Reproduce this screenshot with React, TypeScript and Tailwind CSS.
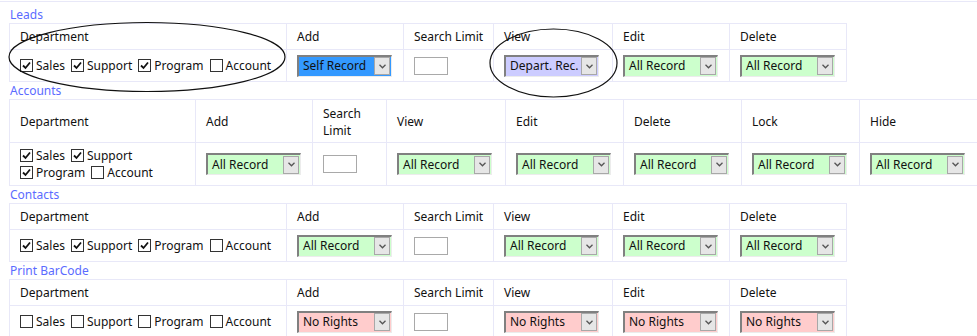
import React from 'react'

type Tone = 'blue' | 'lav' | 'green' | 'red'

const TONE: Record<Tone, string> = {
    blue: 'bg-[#3399ff]',
    lav: 'bg-[#ccccff]',
    green: 'bg-[#ccffcc]',
    red: 'bg-[#ffcccc]',
}

function Check({ on, label }: { on: boolean; label: string }) {
    return (
        <span className="inline-flex items-center mr-[6px]">
            <span className="w-[13px] h-[13px] border border-[#333] bg-white flex items-center justify-center">
                {on && (
                    <svg width="11" height="11" viewBox="0 0 11 11">
                        <path d="M2 5.5 L4.5 8 L9 2.5" fill="none" stroke="#111" strokeWidth="1.8" />
                    </svg>
                )}
            </span>
            <span className="ml-[3px]">{label}</span>
        </span>
    )
}

function Select({ text, tone }: { text: string; tone: Tone }) {
    return (
        <div className={`flex items-center w-[95px] h-[22px] border-t-2 border-l-2 border-[#808080] border-r border-b border-r-[#ececec] border-b-[#ececec] ${TONE[tone]}`}>
            <span className="pl-[4px] flex-1 whitespace-nowrap leading-none">{text}</span>
            <span className="w-[16px] h-[18px] mr-px border border-[#a8a8a8] bg-[#e6e6e6] flex items-center justify-center">
                <svg width="7" height="5" viewBox="0 0 7 5">
                    <path d="M0.5 0.8 L3.5 3.8 L6.5 0.8" fill="none" stroke="#555" strokeWidth="1.3" />
                </svg>
            </span>
        </div>
    )
}

function Limit() {
    return <div className="w-[34px] h-[18px] border border-[#a9a9a9] bg-white" />
}

const cell = 'border-r border-b border-[#e8e8f8] pl-[10px] flex items-center'
const head2 = 'border-r border-b border-[#e8e8f8] pl-[10px] pt-[2px] flex items-center'

function Depts({ on, wrap }: { on: boolean[]; wrap?: boolean }) {
    const names = ['Sales', 'Support', 'Program', 'Account']
    if (wrap) {
        return (
            <div className="flex flex-col leading-[17px]">
                <div className="flex">
                    <Check on={on[0]} label={names[0]} />
                    <Check on={on[1]} label={names[1]} />
                </div>
                <div className="flex">
                    <Check on={on[2]} label={names[2]} />
                    <Check on={on[3]} label={names[3]} />
                </div>
            </div>
        )
    }
    return (
        <div className="flex">
            {names.map((n, i) => <Check key={n} on={on[i]} label={n} />)}
        </div>
    )
}

function Label({ children }: { children: React.ReactNode }) {
    return <div className="h-[17px] pl-[10px] leading-[17px] text-[#5b6bff]">{children}</div>
}

function SmallTable({ on, add, view, rest }: { on: boolean[]; add: [string, Tone]; view: [string, Tone]; rest: [string, Tone] }) {
    return (
        <div className="ml-[9px] grid grid-cols-[277px_117px_90px_119px_117px_117px] grid-rows-[26px_32px] border-l border-t border-[#e8e8f8] w-max">
            <div className={cell}>Department</div>
            <div className={cell}>Add</div>
            <div className={cell}>Search Limit</div>
            <div className={cell}>View</div>
            <div className={cell}>Edit</div>
            <div className={cell}>Delete</div>
            <div className={cell}><Depts on={on} /></div>
            <div className={cell}><Select text={add[0]} tone={add[1]} /></div>
            <div className={cell}><Limit /></div>
            <div className={cell}><Select text={view[0]} tone={view[1]} /></div>
            <div className={cell}><Select text={rest[0]} tone={rest[1]} /></div>
            <div className={cell}><Select text={rest[0]} tone={rest[1]} /></div>
        </div>
    )
}

export default function App() {
    const all: [string, Tone] = ['All Record', 'green']
    const none: [string, Tone] = ['No Rights', 'red']
    return (
        <div className="relative w-[977px] h-[336px] overflow-hidden bg-white text-[12px] text-[#111] font-['Noto_Sans',sans-serif]">
            <div className="mt-px h-px bg-[#e8e8f8]" />
            <div className="h-[4px]" />

            <Label>Leads</Label>
            <SmallTable on={[true, true, true, false]} add={['Self Record', 'blue']} view={['Depart. Rec.', 'lav']} rest={all} />

            <Label>Accounts</Label>
            <div className="ml-[9px] grid grid-cols-[186px_117px_74px_119px_118px_118px_118px_118px] grid-rows-[43px_43px] border-l border-t border-[#e8e8f8] w-max">
                <div className={head2}>Department</div>
                <div className={head2}>Add</div>
                <div className={`${head2} leading-[17px]`}>Search<br />Limit</div>
                <div className={head2}>View</div>
                <div className={head2}>Edit</div>
                <div className={head2}>Delete</div>
                <div className={head2}>Lock</div>
                <div className={head2}>Hide</div>
                <div className={cell}><Depts on={[true, true, true, false]} wrap /></div>
                <div className={cell}><Select text="All Record" tone="green" /></div>
                <div className={cell}><Limit /></div>
                <div className={cell}><Select text="All Record" tone="green" /></div>
                <div className={cell}><Select text="All Record" tone="green" /></div>
                <div className={cell}><Select text="All Record" tone="green" /></div>
                <div className={cell}><Select text="All Record" tone="green" /></div>
                <div className={cell}><Select text="All Record" tone="green" /></div>
            </div>

            <Label>Contacts</Label>
            <SmallTable on={[true, true, true, false]} add={all} view={all} rest={all} />

            <Label>Print BarCode</Label>
            <SmallTable on={[false, false, false, false]} add={none} view={none} rest={none} />

            {/* hand-drawn annotation circles */}
            <svg className="absolute left-0 top-0 pointer-events-none" width="977" height="336">
                <ellipse cx="147" cy="57" rx="138" ry="34.5" fill="none" stroke="#111" strokeWidth="1.2" />
                <ellipse cx="553.5" cy="63" rx="63.5" ry="34" fill="none" stroke="#111" strokeWidth="1.2" />
            </svg>
        </div>
    )
}
